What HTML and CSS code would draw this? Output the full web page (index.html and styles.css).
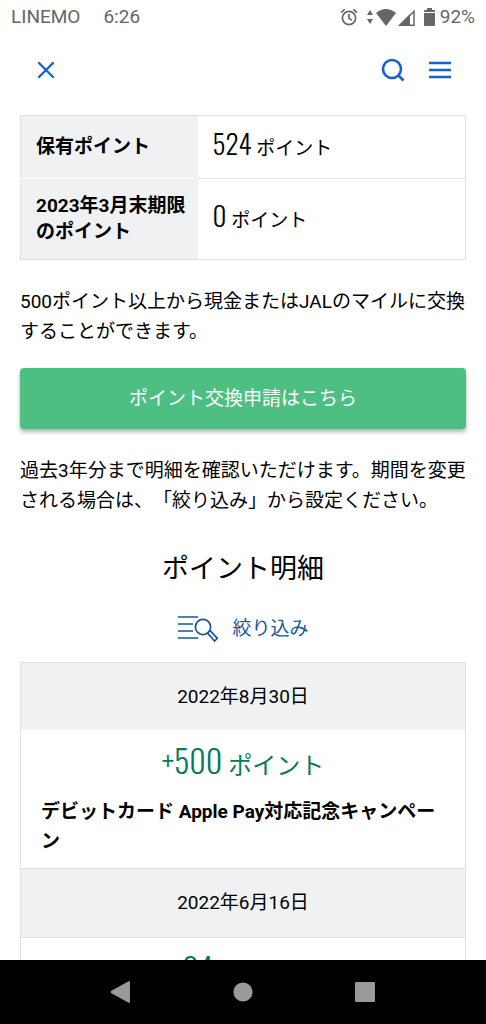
FILE: index.html
```html
<!DOCTYPE html>
<html lang="ja">
<head>
<meta charset="utf-8">
<meta name="viewport" content="width=device-width, initial-scale=1">
<title>ポイント明細</title>
<link rel="stylesheet" href="styles.css">
</head>
<body>
<div class="status">
  <span>LINEMO</span>
  <span class="clock">6:26</span>
  <span class="status-icons">
    <svg width="18" height="18" viewBox="0 0 18 18" fill="none" stroke="#666" stroke-width="1.7"><circle cx="9" cy="10" r="6.6"/><path d="M9 6v4.4l3 2M1 4.6l3.7-3.2M17 4.6l-3.7-3.2"/></svg>
    <svg class="arrows" width="6" height="14" viewBox="0 0 6 14" fill="#666"><path d="M3 0l3 5H0zM3 14l3-5H0z"/></svg>
    <svg width="20" height="17" viewBox="0 0 20 17" fill="#666"><path d="M0 4Q10-4 20 4L10 17z"/></svg>
    <svg class="signal" width="17" height="17" viewBox="0 0 17 17"><path d="M0 17L12 5V17z" fill="#666"/><path d="M2 16.200L16 2.200v14z" fill="none" stroke="#666" stroke-width="1.500"/></svg>
    <svg class="battery" width="11" height="18" viewBox="0 0 11 18" fill="#666"><path d="M3 0h5v2h2q1 0 1 1v1H0V3q0-1 1-1h2zM0 5h11v12q0 1-1 1H1q-1 0-1-1z"/></svg>
    <span>92%</span>
  </span>
</div>
<header class="header">
  <button class="icon-button" aria-label="閉じる"><svg width="18" height="18" viewBox="0 0 18 18" fill="none" stroke="#1760d2" stroke-width="2.300" stroke-linecap="round"><path d="M2 2l14 14M16 2L2 16"/></svg></button>
  <div class="header-actions">
    <button class="icon-button" aria-label="検索"><svg width="24" height="24" viewBox="0 0 24 24" fill="none" stroke="#1760d2" stroke-width="2.600"><circle cx="11" cy="11" r="9"/><path d="M17 17l5.500 5.500"/></svg></button>
    <button class="icon-button" aria-label="メニュー"><svg width="22" height="18" viewBox="0 0 22 18" fill="none" stroke="#1760d2" stroke-width="2.600"><path d="M0 2h22M0 9h22M0 16h22"/></svg></button>
  </div>
</header>
<main class="main">
  <table class="summary">
    <tr><th scope="row">保有ポイント</th><td><span class="number">524</span> ポイント</td></tr>
    <tr><th scope="row">2023年3月末期限<br>のポイント</th><td><span class="number">0</span> ポイント</td></tr>
  </table>
  <p class="note">500ポイント以上から現金またはJALのマイルに交換<br>することができます。</p>
  <button class="exchange">ポイント交換申請はこちら</button>
  <p class="note">過去3年分まで明細を確認いただけます。期間を変更<br>される場合は、「絞り込み」から設定ください。</p>
  <h2 class="title">ポイント明細</h2>
  <a class="filter" href="#history">
    <svg width="42" height="28" viewBox="0 0 42 28" fill="none" stroke="#15599b" stroke-width="1.700"><path d="M1 2h20M1 9h15M1 16h15M1 23h20"/><circle cx="26" cy="12" r="7.600"/><path d="M30.500 18l2.500-2.500 7.300 7.800-2.700 2.700z"/></svg>
    <span>絞り込み</span>
  </a>
  <section class="history" id="history">
    <h3 class="date">2022年8月30日</h3>
    <div class="entry">
      <p class="points"><span class="amount">+500</span> ポイント</p>
      <p class="reason">デビットカード Apple Pay対応記念キャンペーン</p>
    </div>
    <h3 class="date">2022年6月16日</h3>
    <div class="entry">
      <p class="points"><span class="amount">+24</span> ポイント</p>
    </div>
  </section>
</main>
<nav class="system-nav">
  <button class="icon-button" aria-label="戻る"><svg width="20" height="22" viewBox="0 0 20 22" fill="#999"><path d="M19 0q1 0 1 1v20q0 1-1 1L1 12q-1-1 0-2z"/></svg></button>
  <button class="icon-button" aria-label="ホーム"><svg width="20" height="20" viewBox="0 0 20 20" fill="#999"><circle cx="10" cy="10" r="9.600"/></svg></button>
  <button class="icon-button" aria-label="履歴"><svg width="20" height="20" viewBox="0 0 20 20" fill="#999"><rect width="20" height="20" rx="1"/></svg></button>
</nav>
</body>
</html>
```
FILE: styles.css
```css
* { box-sizing: border-box; }
body {
  margin: 0;
  height: 100vh;
  display: flex;
  flex-direction: column;
  overflow: hidden;
  background: #fff;
  color: #000;
  font: 19px/30px Roboto, "Noto Sans CJK JP", sans-serif;
  text-spacing-trim: space-all;
}
svg { display: block; }
button { font: inherit; border: 0; cursor: pointer; }
.status {
  flex: none;
  display: flex;
  align-items: center;
  height: 34px;
  padding: 0 11px;
  color: #666;
}
.clock { margin-left: 23px; }
.status-icons { display: flex; align-items: center; margin-left: auto; }
.arrows { margin: 0 3px 0 9px; }
.signal { margin: 0 9px 0 2px; }
.battery { margin-right: 5px; }
.header {
  flex: none;
  display: flex;
  justify-content: space-between;
  align-items: center;
  height: 72px;
  padding: 0 35px 0 37px;
}
.header-actions { display: flex; align-items: center; gap: 24px; }
.icon-button { padding: 0; background: none; }
.main { flex: 1; min-height: 0; overflow: hidden; padding: 9px 20px 0; }
.summary { width: 100%; border-collapse: collapse; border: 1px solid #dfe1e4; }
.summary th {
  width: 177px;
  padding: 0 12px 0 15px;
  background: #eff1f3;
  border-bottom: 1px solid #fff;
  line-height: 26px;
  text-align: left;
  white-space: nowrap;
}
.summary td { padding: 0 15px; border-bottom: 1px solid #dfe1e4; }
.summary tr { height: 63px; }
.summary tr:last-child { height: 81px; }
.summary tr:last-child > * { border-bottom-color: #dfe1e4; }
.number, .amount { font-family: Oswald, "Open Sans Condensed", "Liberation Sans Narrow", "Roboto Condensed", Roboto, sans-serif; font-weight: 300; line-height: 1; }
.number { font-size: 27px; }
.note { margin: 27px 0 21px; white-space: nowrap; }
.exchange {
  display: block;
  width: 100%;
  height: 61px;
  border-radius: 4px;
  background: #4dbf82;
  box-shadow: 0 3px 4px rgba(0, 0, 0, .3);
  color: #fff;
}
.title { margin: 37px 0 0; font-size: 27px; line-height: 32px; font-weight: 400; text-align: center; }
.filter {
  display: flex;
  justify-content: center;
  align-items: center;
  gap: 13px;
  padding: 29px 0 18px;
  color: #15599b;
  text-decoration: none;
}
.history { border: 1px solid #dfe1e4; }
.date {
  margin: 0;
  height: 67px;
  background: #eff1f3;
  font-size: 19px;
  line-height: 67px;
  font-weight: 400;
  text-align: center;
}
.entry + .date { height: 70px; border: solid #dfe1e4; border-width: 1px 0; }
.entry { padding: 14px 20px 11px; }
.points { margin: 0 0 9px; color: #087a55; font-size: 24px; line-height: 44px; text-align: center; }
.amount { font-size: 32px; }
.reason { margin: 0; font-weight: 700; }
.system-nav {
  flex: none;
  display: flex;
  justify-content: space-between;
  align-items: center;
  height: 64px;
  padding: 0 111px 0 110px;
  background: #000;
}
```
